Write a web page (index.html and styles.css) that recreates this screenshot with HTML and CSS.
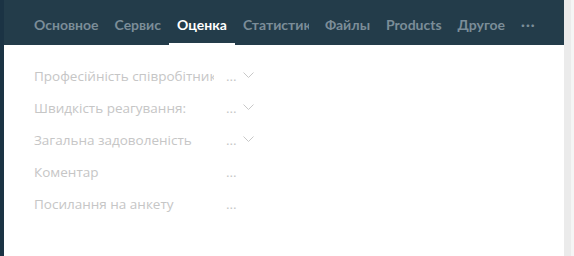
FILE: index.html
```html
<!DOCTYPE html>
<html>
<head>
<meta charset="utf-8">
<link rel="stylesheet" href="styles.css">
</head>
<body>
<div class="page">
  <div class="edge"></div>
  <div class="main">
    <nav class="tabs">
      <div class="tab">Основное</div>
      <div class="tab">Сервис</div>
      <div class="tab active">Оценка</div>
      <div class="tab"><span class="clip">Статистика</span></div>
      <div class="tab">Файлы</div>
      <div class="tab">Products</div>
      <div class="tab">Другое</div>
      <div class="tab more">···</div>
    </nav>
    <div class="content">
      <div class="row"><div class="label">Професійність співробітників</div><div class="value">...<svg class="chev" width="11" height="7" viewBox="0 0 11 7"><path d="M0.5 0.5 L5.5 5.5 L10.5 0.5" fill="none" stroke="#c8c8c8" stroke-width="1"/></svg></div></div>
      <div class="row"><div class="label">Швидкість реагування:</div><div class="value">...<svg class="chev" width="11" height="7" viewBox="0 0 11 7"><path d="M0.5 0.5 L5.5 5.5 L10.5 0.5" fill="none" stroke="#c8c8c8" stroke-width="1"/></svg></div></div>
      <div class="row"><div class="label">Загальна задоволеність</div><div class="value">...<svg class="chev" width="11" height="7" viewBox="0 0 11 7"><path d="M0.5 0.5 L5.5 5.5 L10.5 0.5" fill="none" stroke="#c8c8c8" stroke-width="1"/></svg></div></div>
      <div class="row"><div class="label">Коментар</div><div class="value">...</div></div>
      <div class="row"><div class="label">Посилання на анкету</div><div class="value">...</div></div>
    </div>
  </div>
  <div class="scroll"><div class="track"></div><div class="rail"></div></div>
</div>
</body>
</html>
```
FILE: styles.css
```css
html, body { margin: 0; padding: 0; }
body { width: 574px; height: 256px; overflow: hidden; background: #fff; font-family: "Lato", "Open Sans", sans-serif; }
.page { display: flex; height: 256px; }
.edge { width: 4px; background: #1b3344; flex: none; }
.main { flex: 1; display: flex; flex-direction: column; min-width: 0; }
.tabs { height: 45px; background: #233c4a; display: flex; align-items: stretch; padding-left: 22px; box-sizing: border-box; }
.tab { font-size: 14px; font-weight: 700; color: #7b8d98; padding: 16px 8px 0; box-sizing: border-box; white-space: nowrap; }
.tab.active { color: #ffffff; border-bottom: 2px solid #ffffff; }
.clip { display: inline-block; width: 66px; overflow: hidden; vertical-align: top; }
.tab.more { letter-spacing: 1px; }
.content { padding: 22px 0 0 30px; }
.row { display: flex; height: 32px; align-items: flex-start; }
.label { width: 180px; overflow: hidden; white-space: nowrap; font-family: "Open Sans", sans-serif; font-size: 13.5px; color: #c6c6c6; margin-right: 12px; }
.value { font-family: "Open Sans", sans-serif; font-size: 13.5px; color: #c6c6c6; display: flex; align-items: center; }
.chev { margin-left: 6px; margin-top: -2px; }
.scroll { width: 10px; flex: none; display: flex; }
.track { width: 7px; background: #ebebeb; }
.rail { width: 3px; background: #f5f5f5; }
```
